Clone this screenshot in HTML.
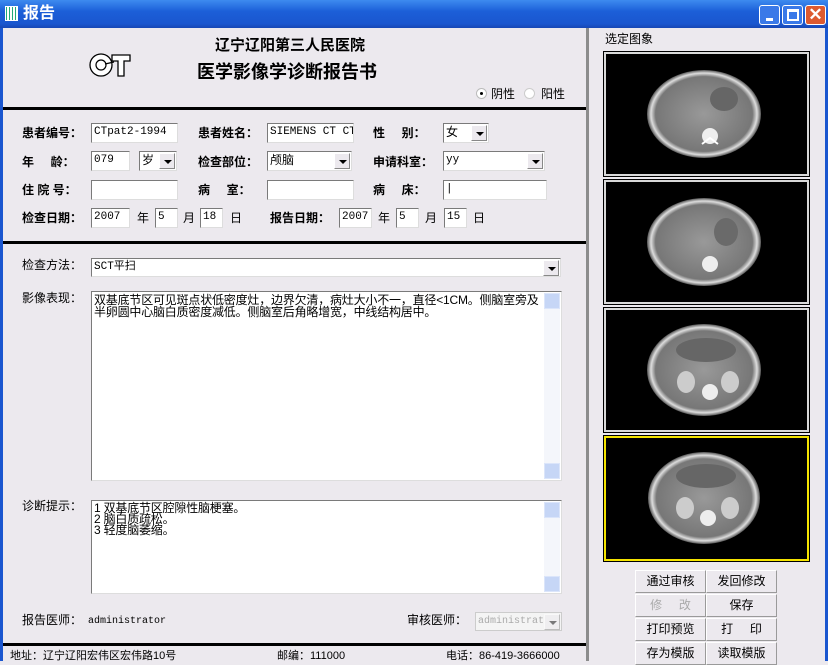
<!DOCTYPE html>
<html><head><meta charset="utf-8">
<style>
*{margin:0;padding:0;box-sizing:border-box}
body{width:828px;height:661px;overflow:hidden;background:#ECE9EE;position:relative;font-family:"Liberation Sans","Noto Sans CJK SC","WenQuanYi Zen Hei",sans-serif;font-size:12px;color:#000}
.a{position:absolute}
.t{position:absolute;white-space:nowrap;font-size:12px;line-height:14px}
.b{font-weight:bold}
.in{position:absolute;background:#fff;border:1px solid #7f9db9;border-top-color:#7a7a7a;border-left-color:#7a7a7a;border-right-color:#ddd;border-bottom-color:#ddd;font-family:"Liberation Mono","Noto Sans CJK SC",monospace;font-size:11px;line-height:17px;padding-left:2px;white-space:nowrap;overflow:hidden}
.dd{position:absolute;right:1px;top:1px;width:16px;height:16px;background:#ECE9EE;border:1px solid #fff;border-right-color:#888;border-bottom-color:#888}
.dd:after{content:"";position:absolute;left:4px;top:6px;border-left:4px solid transparent;border-right:4px solid transparent;border-top:4px solid #000}
.line{position:absolute;left:3px;width:583px;height:3px;background:#000}
.ct{position:absolute;background:#000;border:2px solid #d9d9d9;outline:1px solid #000}
.btn{position:absolute;width:71px;height:23px;background:#ECE9EE;border:1px solid #fff;border-right-color:#9a9a9a;border-bottom-color:#9a9a9a;text-align:center;line-height:21px;font-size:12px}
.sb{position:absolute;right:1px;top:1px;bottom:1px;width:16px;background:#f4f6fb}
.sb i{position:absolute;left:0;width:16px;height:16px;background:#c6d6f6;border:1px solid #dbe5fa}
.ta{white-space:normal;font-family:"Liberation Sans","Noto Sans CJK SC",sans-serif;font-size:12px;line-height:12px;padding:2px 20px 0 2px;letter-spacing:-0.2px}
</style></head><body>
<div class="a" style="left:0;top:0;width:828px;height:28px;background:linear-gradient(#3d8bef,#1c5fd8 40%,#1a56cf 85%,#1747b5)"></div>
<div class="a" style="left:5px;top:6px;width:13px;height:15px;background:repeating-linear-gradient(90deg,#2a7 0 1px,#fff 1px 3px);border:1px solid #fff"></div>
<div class="t b" style="left:23px;top:4px;font-size:16px;line-height:19px;color:#fff">报告</div>
<div class="a" style="left:759px;top:5px;width:21px;height:20px;border:1px solid #fff;border-radius:3px;background:#3a79e8"><div class="a" style="left:6px;top:12px;width:7px;height:3px;background:#fff"></div></div>
<div class="a" style="left:782px;top:5px;width:21px;height:20px;border:1px solid #fff;border-radius:3px;background:#3a79e8"><div class="a" style="left:4px;top:3px;width:12px;height:12px;border:2px solid #fff;border-top-width:3px"></div></div>
<div class="a" style="left:805px;top:5px;width:21px;height:20px;border:1px solid #fff;border-radius:3px;background:#dd5a30;color:#fff;font-size:17px;line-height:17px;text-align:center;font-weight:bold">✕</div>
<div class="a" style="left:0;top:28px;width:3px;height:633px;background:#1a56cf"></div>
<div class="a" style="left:825px;top:28px;width:3px;height:633px;background:#1a56cf"></div>
<div class="a" style="left:586px;top:28px;width:3px;height:633px;background:#8c8c8c"></div>

<svg class="a" style="left:88px;top:50px" width="44" height="30" viewBox="0 0 44 30">
<circle cx="13" cy="15" r="11" fill="#fff" stroke="#000" stroke-width="1.3"/>
<circle cx="13" cy="15" r="5" fill="#fff" stroke="#000" stroke-width="1.2"/>
<line x1="17" y1="14" x2="26" y2="12" stroke="#000" stroke-width="1.2"/>
<path d="M24 5 H42 V11 H36 V26 H30 V11 H24 Z" fill="#fff" stroke="#000" stroke-width="1.3"/>
</svg>
<div class="t b" style="left:215px;top:37px;font-size:15px;line-height:18px">辽宁辽阳第三人民医院</div>
<div class="t b" style="left:197px;top:61px;font-size:18px;line-height:22px">医学影像学诊断报告书</div>
<div class="a" style="left:476px;top:88px;width:11px;height:11px;border-radius:50%;background:#fff;border:1px solid #bbb"><div class="a" style="left:3px;top:3px;width:3px;height:3px;background:#000;border-radius:50%"></div></div>
<div class="t" style="left:491px;top:87px">阴性</div>
<div class="a" style="left:524px;top:88px;width:11px;height:11px;border-radius:50%;background:#fff;border:1px solid #ccc"></div>
<div class="t" style="left:541px;top:87px">阳性</div>
<div class="line" style="top:107px"></div>

<div class="t b" style="left:22px;top:126px">患者编号：</div>
<div class="in" style="left:91px;top:123px;width:87px;height:20px">CTpat2-1994</div>
<div class="t b" style="left:198px;top:126px">患者姓名：</div>
<div class="in" style="left:267px;top:123px;width:87px;height:20px">SIEMENS CT CTA</div>
<div class="t b" style="left:373px;top:126px">性&nbsp;&nbsp;&nbsp;&nbsp;&nbsp;别：</div>
<div class="in" style="left:443px;top:123px;width:46px;height:20px;font-family:'Liberation Sans','Noto Sans CJK SC',sans-serif;font-size:12px">女<span class="dd"></span></div>

<div class="t b" style="left:22px;top:155px">年&nbsp;&nbsp;&nbsp;&nbsp;&nbsp;龄：</div>
<div class="in" style="left:91px;top:151px;width:39px;height:20px">079</div>
<div class="in" style="left:139px;top:151px;width:38px;height:20px;font-family:'Liberation Sans','Noto Sans CJK SC',sans-serif;font-size:12px">岁<span class="dd"></span></div>
<div class="t b" style="left:198px;top:155px">检查部位：</div>
<div class="in" style="left:267px;top:151px;width:85px;height:20px;font-family:'Liberation Sans','Noto Sans CJK SC',sans-serif;font-size:12px">颅脑<span class="dd"></span></div>
<div class="t b" style="left:373px;top:155px">申请科室：</div>
<div class="in" style="left:443px;top:151px;width:102px;height:20px">yy<span class="dd"></span></div>

<div class="t b" style="left:22px;top:183px">住&nbsp;院&nbsp;号：</div>
<div class="in" style="left:91px;top:180px;width:87px;height:20px"></div>
<div class="t b" style="left:198px;top:183px">病&nbsp;&nbsp;&nbsp;&nbsp;&nbsp;室：</div>
<div class="in" style="left:267px;top:180px;width:87px;height:20px"></div>
<div class="t b" style="left:373px;top:183px">病&nbsp;&nbsp;&nbsp;&nbsp;&nbsp;床：</div>
<div class="in" style="left:443px;top:180px;width:104px;height:20px">|</div>

<div class="t b" style="left:22px;top:211px">检查日期：</div>
<div class="in" style="left:91px;top:208px;width:39px;height:20px">2007</div>
<div class="t" style="left:137px;top:211px">年</div>
<div class="in" style="left:155px;top:208px;width:23px;height:20px">5</div>
<div class="t" style="left:183px;top:211px">月</div>
<div class="in" style="left:200px;top:208px;width:23px;height:20px">18</div>
<div class="t" style="left:230px;top:211px">日</div>
<div class="t b" style="left:270px;top:211px">报告日期：</div>
<div class="in" style="left:339px;top:208px;width:33px;height:20px">2007</div>
<div class="t" style="left:378px;top:211px">年</div>
<div class="in" style="left:396px;top:208px;width:23px;height:20px">5</div>
<div class="t" style="left:425px;top:211px">月</div>
<div class="in" style="left:444px;top:208px;width:23px;height:20px">15</div>
<div class="t" style="left:473px;top:211px">日</div>
<div class="line" style="top:241px"></div>

<div class="t" style="left:22px;top:258px">检查方法：</div>
<div class="in" style="left:91px;top:258px;width:470px;height:19px;font-size:11px">SCT平扫<span class="dd"></span></div>
<div class="t" style="left:22px;top:291px">影像表现：</div>
<div class="in ta" style="left:91px;top:291px;width:471px;height:190px">双基底节区可见斑点状低密度灶，边界欠清，病灶大小不一，直径&lt;1CM。侧脑室旁及<br>半卵圆中心脑白质密度减低。侧脑室后角略增宽，中线结构居中。<div class="sb"><i style="top:0"></i><i style="bottom:0"></i></div></div>
<div class="t" style="left:22px;top:499px">诊断提示：</div>
<div class="in ta" style="left:91px;top:500px;width:471px;height:94px;line-height:11px">1 双基底节区腔隙性脑梗塞。<br>2 脑白质疏松。<br>3 轻度脑萎缩。<div class="sb"><i style="top:0"></i><i style="bottom:0"></i></div></div>
<div class="t" style="left:22px;top:613px">报告医师：</div>
<div class="t" style="left:88px;top:615px;font-family:'Liberation Mono',monospace;font-size:10px">administrator</div>
<div class="t" style="left:407px;top:613px">审核医师：</div>
<div class="in" style="left:475px;top:612px;width:87px;height:19px;background:#f4f4f4;color:#aaa;font-size:10px;border-color:#ccc">administrat<span class="dd" style="opacity:.5"></span></div>
<div class="line" style="top:643px"></div>
<div class="t" style="left:10px;top:649px;font-size:11px">地址：辽宁辽阳宏伟区宏伟路10号</div>
<div class="t" style="left:277px;top:649px;font-size:11px">邮编：111000</div>
<div class="t" style="left:446px;top:649px;font-size:11px">电话：86-419-3666000</div>

<div class="t" style="left:605px;top:32px">选定图象</div>
<div class="ct" style="left:604px;top:52px;width:205px;height:124px"></div>
<div class="ct" style="left:604px;top:180px;width:205px;height:124px"></div>
<div class="ct" style="left:604px;top:308px;width:205px;height:124px"></div>
<div class="ct" style="left:604px;top:436px;width:205px;height:125px;border-color:#f5e400;outline-color:#000"></div>
<svg class="a" style="left:606px;top:54px" width="201" height="505">
<defs><radialGradient id="g" cx="50%" cy="50%" r="50%"><stop offset="0" stop-color="#999"/><stop offset=".85" stop-color="#777"/><stop offset=".93" stop-color="#ddd"/><stop offset="1" stop-color="#555"/></radialGradient></defs>
<g><ellipse cx="98" cy="60" rx="57" ry="44" fill="url(#g)"/><ellipse cx="118" cy="45" rx="14" ry="12" fill="#666"/><circle cx="104" cy="82" r="8" fill="#eee"/><path d="M96 90 l8 -6 l8 6" stroke="#fff" stroke-width="2" fill="none"/></g>
<g transform="translate(0,128)"><ellipse cx="98" cy="60" rx="57" ry="44" fill="url(#g)"/><ellipse cx="120" cy="50" rx="12" ry="14" fill="#6a6a6a"/><circle cx="104" cy="82" r="8" fill="#eee"/></g>
<g transform="translate(0,256)"><ellipse cx="98" cy="60" rx="57" ry="46" fill="url(#g)"/><ellipse cx="100" cy="40" rx="30" ry="12" fill="#666"/><circle cx="104" cy="82" r="8" fill="#eee"/><ellipse cx="80" cy="72" rx="9" ry="11" fill="#ccc"/><ellipse cx="124" cy="72" rx="9" ry="11" fill="#ccc"/></g>
<g transform="translate(0,384)"><ellipse cx="98" cy="60" rx="56" ry="46" fill="url(#g)"/><ellipse cx="100" cy="38" rx="30" ry="12" fill="#666"/><circle cx="102" cy="80" r="8" fill="#eee"/><ellipse cx="79" cy="70" rx="9" ry="11" fill="#ccc"/><ellipse cx="124" cy="70" rx="9" ry="11" fill="#ccc"/></g>
</svg>
<div class="btn" style="left:635px;top:570px">通过审核</div>
<div class="btn" style="left:706px;top:570px">发回修改</div>
<div class="btn" style="left:635px;top:594px;color:#aaa">修&nbsp;&nbsp;&nbsp;&nbsp;&nbsp;改</div>
<div class="btn" style="left:706px;top:594px">保存</div>
<div class="btn" style="left:635px;top:618px">打印预览</div>
<div class="btn" style="left:706px;top:618px">打&nbsp;&nbsp;&nbsp;&nbsp;&nbsp;印</div>
<div class="btn" style="left:635px;top:642px">存为模版</div>
<div class="btn" style="left:706px;top:642px">读取模版</div>
</body></html>
